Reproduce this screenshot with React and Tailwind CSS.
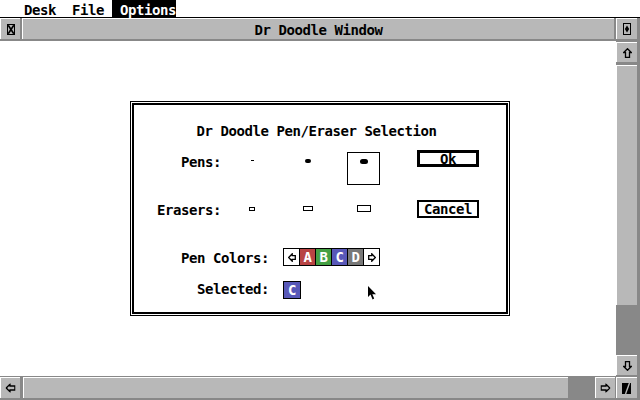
import React from "react";

const LG = "bg-[#b8b8b8]";

function Arrow({ cls = "" }) {
  return (
    <svg width="9" height="10" viewBox="0 0 9 10" className={cls}>
      <path d="M4.5 0.7 L8.3 4.5 L6.5 4.5 L6.5 9.4 L2.5 9.4 L2.5 4.5 L0.7 4.5 Z" fill="none" stroke="black" strokeWidth="1.3" strokeLinejoin="miter" />
    </svg>
  );
}

function SmallArrow({ cls = "" }) {
  return (
    <svg width="8" height="9" viewBox="0 0 8 9" className={cls}>
      <path d="M0.7 4.5 L4.2 0.8 L4.2 2.6 L7.3 2.6 L7.3 6.4 L4.2 6.4 L4.2 8.2 Z" fill="none" stroke="black" strokeWidth="1.3" />
    </svg>
  );
}

function CloseIcon() {
  return (
    <svg width="8" height="11" viewBox="0 0 8 11">
      <rect x="0.5" y="0.5" width="7" height="10" fill="none" stroke="black" />
      <path d="M1.2 1.2 L6.8 9.8 M6.8 1.2 L1.2 9.8" stroke="black" strokeWidth="1.6" />
    </svg>
  );
}

function FullIcon() {
  return (
    <svg width="8" height="12" viewBox="0 0 8 12">
      <rect x="0.5" y="0.5" width="7" height="11" fill="none" stroke="black" />
      <path d="M4 2.5 L6.2 6 L4 9.5 L1.8 6 Z" fill="black" />
    </svg>
  );
}

function SizeIcon() {
  return (
    <svg width="10" height="11" viewBox="0 0 10 11">
      <rect x="0" y="0" width="9" height="11" fill="black" />
      <path d="M7.5 0 L3.5 11" stroke="#b8b8b8" strokeWidth="1.4" />
    </svg>
  );
}

function Widget({ className = "", children }) {
  return (
    <div className={`${LG} border-t border-l border-white flex items-center justify-center ${className}`}>
      {children}
    </div>
  );
}

function Cell({ color, children }) {
  return (
    <div className={`w-[16px] h-[16px] border-l border-black flex items-center justify-center text-white ${color}`}>
      {children}
    </div>
  );
}

export default function App() {
  return (
    <div
      className="relative w-[640px] h-[400px] overflow-hidden bg-white text-black font-bold text-[14px] tracking-[-0.43px] leading-[16px]"
      style={{ fontFamily: "'DejaVu Sans Mono', 'Liberation Mono', monospace" }}
    >
      {/* Menu bar */}
      <div className="flex h-[18px] bg-white border-b border-black">
        <span className="ml-[16px] px-[8px] pt-[2px]">Desk</span>
        <span className="px-[8px] pt-[2px]">File</span>
        <span className="pl-[8px] pt-[2px] h-[18px] bg-black text-white">Options</span>
      </div>

      {/* Title row */}
      <div className="flex h-[23px] bg-[#888888]">
        <Widget className="w-[20px] h-[21px] mr-[2px]">
          <CloseIcon />
        </Widget>
        <Widget className="flex-1 h-[21px] mr-[2px]">
          <span className="pt-[1px]">Dr Doodle Window</span>
        </Widget>
        <Widget className="w-[21px] h-[21px] mr-[3px]">
          <FullIcon />
        </Widget>
      </div>

      {/* Middle */}
      <div className="flex h-[335px]">
        <div className="flex-1 bg-white pl-[130px] pt-[60px]">
          <div className="w-[380px] h-[215px] border border-black p-px bg-white">
            <div className="w-full h-full border-2 border-black flex flex-col">
              <div className="mt-[18px] h-[16px] text-center pr-[7px]">Dr Doodle Pen/Eraser Selection</div>

              {/* Pens */}
              <div className="mt-[11px] flex h-[34px] items-start">
                <div className="w-[87px] text-right mt-[4px]">Pens:</div>
                <div className="ml-[30px] mt-[10px] w-[3px] h-px bg-black" />
                <div className="ml-[51px] mt-[9px] w-[6px] h-[4px] rounded-full bg-black" />
                <div className="ml-[36px] mt-[2px] w-[33px] h-[33px] border border-black flex justify-center pt-[6px]">
                  <div className="w-[8px] h-[5px] rounded-full bg-black" />
                </div>
                <div className="ml-[37px] w-[62px] h-[17px] border-[3px] border-black flex items-center justify-center">Ok</div>
              </div>

              {/* Erasers */}
              <div className="mt-[16px] flex h-[18px] items-start">
                <div className="w-[87px] text-right mt-[2px]">Erasers:</div>
                <div className="ml-[28px] mt-[7px] w-[6px] h-[4px] border border-black" />
                <div className="ml-[48px] mt-[6px] w-[10px] h-[5px] border border-black" />
                <div className="ml-[44px] mt-[5px] w-[14px] h-[7px] border border-black" />
                <div className="ml-[46px] w-[62px] h-[18px] border-2 border-black flex items-center justify-center">Cancel</div>
              </div>

              {/* Pen colors */}
              <div className="mt-[30px] flex items-start">
                <div className="w-[135px] text-right mt-[2px]">Pen Colors:</div>
                <div className="ml-[14px] flex border border-black bg-white">
                  <div className="w-[15px] h-[16px] flex items-center justify-center">
                    <SmallArrow />
                  </div>
                  <Cell color="bg-[#b84444]">A</Cell>
                  <Cell color="bg-[#44a044]">B</Cell>
                  <Cell color="bg-[#5858b8]">C</Cell>
                  <Cell color="bg-[#787878]">D</Cell>
                  <div className="w-[16px] h-[16px] border-l border-black flex items-center justify-center">
                    <SmallArrow cls="rotate-180" />
                  </div>
                </div>
              </div>

              {/* Selected */}
              <div className="mt-[15px] flex items-start">
                <div className="w-[135px] text-right">Selected:</div>
                <div className="ml-[14px] w-[18px] h-[18px] border border-black bg-[#5858b8] text-white flex items-center justify-center">C</div>
              </div>
            </div>
          </div>
        </div>

        {/* Vertical scrollbar */}
        <div className="w-[24px] bg-[#888888] flex flex-col pt-px pr-[3px]">
          <Widget className="w-[21px] h-[20px]">
            <Arrow />
          </Widget>
          <div className="mt-[3px] h-[288px] flex flex-col">
            <div className={`w-[21px] h-[240px] ${LG} border-t border-l border-white`} />
          </div>
          <Widget className="mt-[2px] w-[21px] h-[20px]">
            <Arrow cls="rotate-180" />
          </Widget>
        </div>
      </div>

      {/* Bottom row */}
      <div className="flex h-[24px] bg-[#888888] pt-px">
        <Widget className="w-[20px] h-[21px] mr-[3px]">
          <Arrow cls="-rotate-90" />
        </Widget>
        <div className="w-[570px] h-[21px] mr-[2px] flex">
          <div className={`w-[545px] h-[21px] ${LG} border-t border-l border-white`} />
        </div>
        <Widget className="w-[20px] h-[21px] mr-px">
          <Arrow cls="rotate-90" />
        </Widget>
        <Widget className="w-[21px] h-[21px]">
          <SizeIcon />
        </Widget>
      </div>

      {/* Mouse cursor */}
      <svg className="absolute left-[368px] top-[286px]" width="9" height="14" viewBox="0 0 9 14">
        <path d="M0 0 L0 11 L2.5 8.6 L4.6 13.4 L6.2 12.6 L4.3 8.2 L8 8.2 Z" fill="black" />
      </svg>
    </div>
  );
}
